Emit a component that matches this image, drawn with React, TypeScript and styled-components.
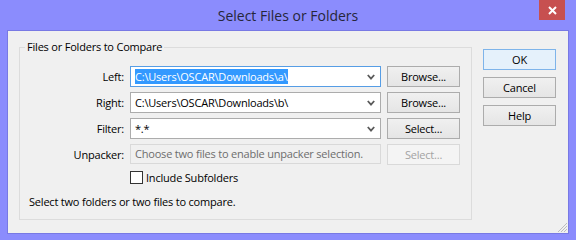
import React from "react";
import styled, {createGlobalStyle} from "styled-components";

const GlobalStyle = createGlobalStyle`
  body {
    margin: 0;
    background: #8b8cfd;
  }
`

const Window = styled.div`
  width: 576px;
  height: 240px;
  background: #8b8cfd;
  display: flex;
  flex-direction: column;
  font-family: "Open Sans", "Liberation Sans", Arial, sans-serif;
  font-size: 11px;
  letter-spacing: -0.2px;
  color: #000;
  box-sizing: border-box;
`

const TitleBar = styled.div`
  height: 30px;
  display: grid;
  grid-template-columns: 1fr auto 1fr;
  align-items: start;
`

const Title = styled.div`
  grid-column: 2;
  font-size: 14px;
  letter-spacing: 0;
  line-height: 32px;
  color: #26263a;
`

const CloseButton = styled.div`
  grid-column: 3;
  justify-self: end;
  width: 26px;
  height: 20px;
  margin-right: 11px;
  background: #c75050;
  display: flex;
  align-items: center;
  justify-content: center;
`

const Client = styled.div`
  position: relative;
  height: 204px;
  margin: 0 7px;
  box-sizing: border-box;
  background: #f0f0f0;
  border: 1px solid #7879e4;
  display: flex;
  align-items: flex-start;
  padding-left: 11px;
  gap: 11px;
`

const GroupBox = styled.div`
  position: relative;
  margin-top: 16px;
  width: 453px;
  height: 173px;
  box-sizing: border-box;
  border: 1px solid #dcdcdc;
  padding: 18px 0 0 9px;
`

const GroupTitle = styled.span`
  position: absolute;
  top: -9px;
  left: 5px;
  padding: 0 2px;
  background: #f0f0f0;
  line-height: 16px;
`

const Form = styled.div`
  display: grid;
  grid-template-columns: 95px 251px 73px;
  grid-template-rows: repeat(4, 21px) auto auto;
  column-gap: 6px;
  row-gap: 5px;
  align-items: center;
`

const Label = styled.div`
  text-align: right;
  white-space: nowrap;
`

const Combo = styled.div<{ $focused?: boolean }>`
  height: 21px;
  box-sizing: border-box;
  background: #fff;
  border: 1px solid ${p => p.$focused ? "#569de5" : "#acacac"};
  display: flex;
  align-items: center;
  padding: 0 0 0 4px;
`

const ComboText = styled.span<{ $selected?: boolean }>`
  flex: 1;
  white-space: nowrap;
  overflow: hidden;
  line-height: 15px;
  span {
    background: ${p => p.$selected ? "#3399ff" : "transparent"};
    color: ${p => p.$selected ? "#fff" : "#000"};
    padding-right: 1px;
  }
`

const Chevron = styled.svg`
  width: 8px;
  height: 6px;
  margin: 0 5px 0 4px;
`

const DisabledField = styled.div`
  height: 20px;
  box-sizing: border-box;
  align-self: start;
  background: #f0f0f0;
  border: 1px solid #d9d9d9;
  color: #6d6d6d;
  padding-left: 4px;
  line-height: 18px;
  white-space: nowrap;
  overflow: hidden;
`

const Button = styled.div<{ $default?: boolean; $disabled?: boolean }>`
  height: 21px;
  width: 73px;
  box-sizing: border-box;
  display: flex;
  align-items: center;
  justify-content: center;
  border: 1px solid ${p => p.$default ? "#7eb4ea" : p.$disabled ? "#d9d9d9" : "#acacac"};
  background: ${p => p.$default
    ? "#e5f1fb"
    : p.$disabled
      ? "#f4f4f4"
      : "linear-gradient(#f0f0f0, #e5e5e5)"};
  color: ${p => p.$disabled ? "#a3a3a3" : "#000"};
`

const CheckRow = styled.label`
  grid-column: 2 / span 2;
  display: flex;
  align-items: center;
  gap: 3px;
  height: 13px;
  margin-top: 1px;
`

const CheckBox = styled.span`
  width: 13px;
  height: 13px;
  box-sizing: border-box;
  border: 1px solid #333;
  background: #fff;
`

const Status = styled.div`
  grid-column: 1 / span 3;
  margin-top: 5px;
  line-height: 15px;
`

const ButtonColumn = styled.div`
  margin-top: 18px;
  display: flex;
  flex-direction: column;
  gap: 7px;
`

const Grip = styled.svg`
  position: absolute;
  right: 0;
  bottom: 0;
`

const ChevronIcon = () => (
    <Chevron viewBox="0 0 8 6">
        <path d="M0.8 1 L4 4.6 L7.2 1" fill="none" stroke="#5a5a5a" strokeWidth="1.8"/>
    </Chevron>
)

const App: React.FC = () => {
    return (
        <>
            <GlobalStyle/>
            <Window>
                <TitleBar>
                    <Title>Select Files or Folders</Title>
                    <CloseButton>
                        <svg width="9" height="9" viewBox="0 0 9 9">
                            <path d="M1 1 L8 8 M8 1 L1 8" stroke="#fff" strokeWidth="2"/>
                        </svg>
                    </CloseButton>
                </TitleBar>
                <Client>
                    <GroupBox>
                        <GroupTitle>Files or Folders to Compare</GroupTitle>
                        <Form>
                            <Label>Left:</Label>
                            <Combo $focused>
                                <ComboText $selected><span>C:\Users\OSCAR\Downloads\a\</span></ComboText>
                                <ChevronIcon/>
                            </Combo>
                            <Button>Browse...</Button>

                            <Label>Right:</Label>
                            <Combo>
                                <ComboText><span>C:\Users\OSCAR\Downloads\b\</span></ComboText>
                                <ChevronIcon/>
                            </Combo>
                            <Button>Browse...</Button>

                            <Label>Filter:</Label>
                            <Combo>
                                <ComboText><span>*.*</span></ComboText>
                                <ChevronIcon/>
                            </Combo>
                            <Button>Select...</Button>

                            <Label>Unpacker:</Label>
                            <DisabledField>Choose two files to enable unpacker selection.</DisabledField>
                            <Button $disabled>Select...</Button>

                            <CheckRow>
                                <CheckBox/>
                                Include Subfolders
                            </CheckRow>
                            <Status>Select two folders or two files to compare.</Status>
                        </Form>
                    </GroupBox>
                    <ButtonColumn>
                        <Button $default>OK</Button>
                        <Button>Cancel</Button>
                        <Button>Help</Button>
                    </ButtonColumn>
                    <Grip width="13" height="13" viewBox="0 0 13 13">
                        <path d="M12 3 L3 12 M12 6 L6 12 M12 9 L9 12" stroke="#bdbdbd" strokeWidth="1"/>
                    </Grip>
                </Client>
            </Window>
        </>
    );
};

export default App;
